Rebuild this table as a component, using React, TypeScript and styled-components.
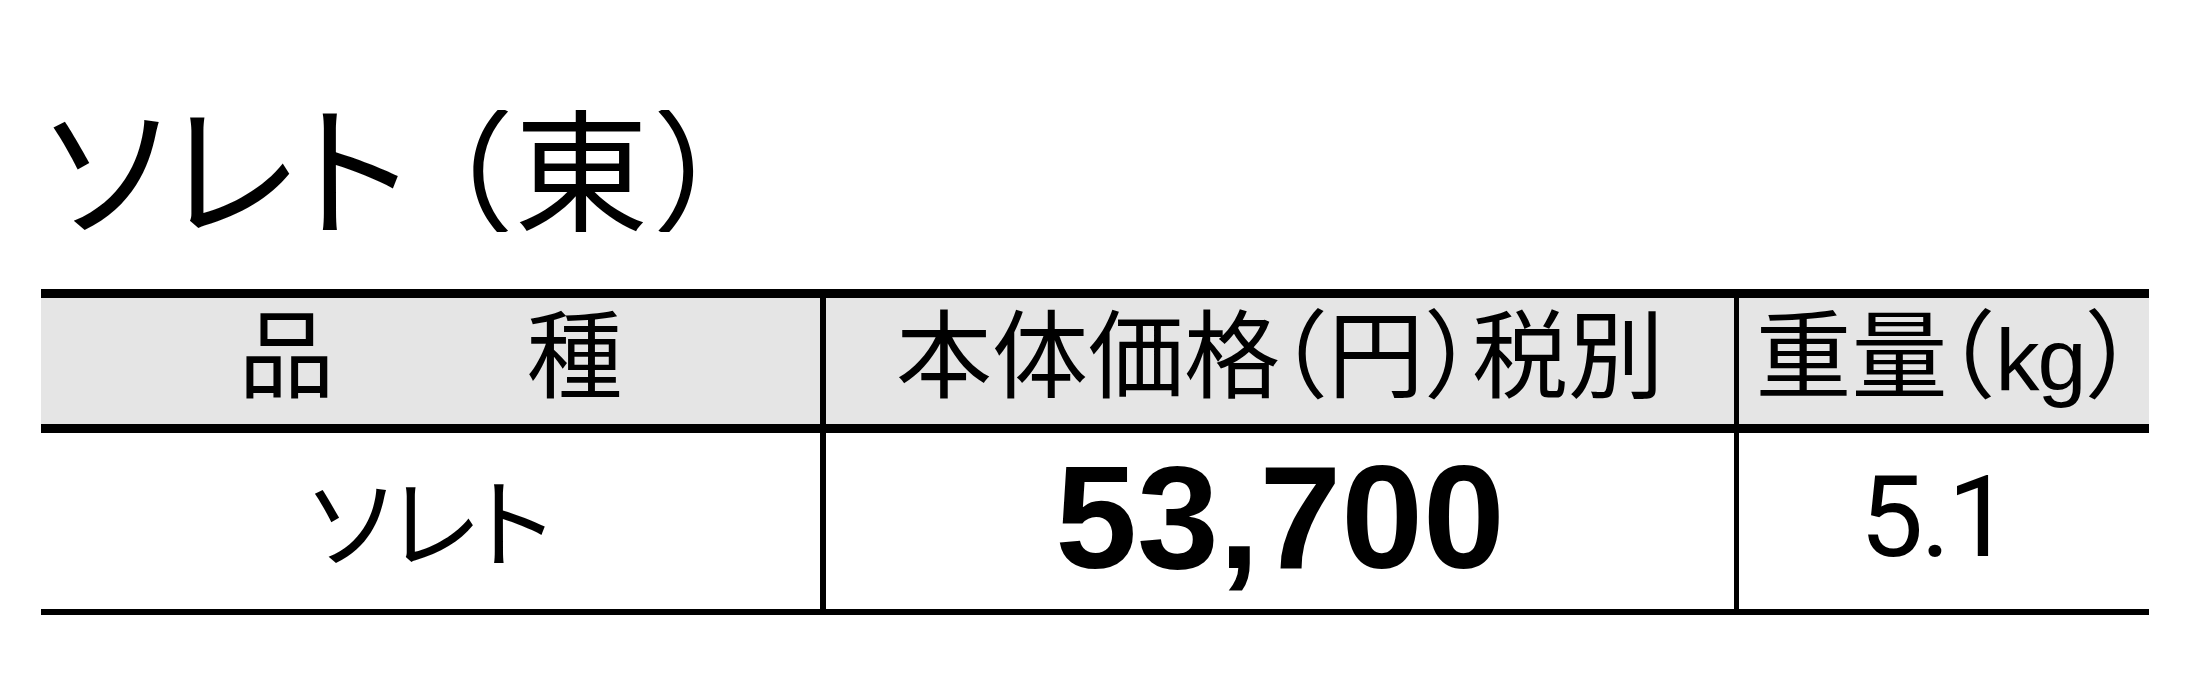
import React from "react";
import styled, { createGlobalStyle } from "styled-components";

const GlobalStyle = createGlobalStyle`
  html, body {
    margin: 0;
    padding: 0;
    background: #ffffff;
  }
  body {
    font-family: "Noto Sans CJK JP", "Noto Sans", sans-serif;
    color: #000000;
  }
`;

const Page = styled.div`
  width: 2210px;
  height: 686px;
  box-sizing: border-box;
  padding: 110px 0 0 41px;
  background: #ffffff;
`;

const TitleClip = styled.div`
  height: 122px;
  overflow: hidden;
  margin-left: 4px;
`;

const TitleText = styled.h1`
  margin: -13px 0 0 0;
  font-family: "Noto Sans CJK JP", sans-serif;
  font-weight: 400;
  font-size: 134px;
  line-height: 134px;
  white-space: nowrap;
  font-feature-settings: "halt";
`;

const TitleKana = styled.span`
  font-size: 145px;
  line-height: 100px;
  vertical-align: -4px;
  font-feature-settings: "palt";
  letter-spacing: 2px;
  margin-right: 37px;
`;

const Paren = styled.span`
  margin: 0 4px;
`;

const Table = styled.div`
  margin-top: 57px;
  width: 2108px;
  display: flex;
  flex-direction: column;
`;

const Row = styled.div<{ $head?: boolean }>`
  display: grid;
  grid-template-columns: 779px 914px 415px;
  height: ${(p) => (p.$head ? "144px" : "182px")};
  box-sizing: border-box;
  border-top: ${(p) => (p.$head ? "9px solid #000" : "0")};
  border-bottom: ${(p) => (p.$head ? "9px" : "6px")} solid #000;
  background: ${(p) => (p.$head ? "#e5e5e5" : "#ffffff")};
`;

const Cell = styled.div<{ $divider?: number }>`
  display: flex;
  align-items: center;
  justify-content: center;
  box-sizing: border-box;
  border-left: ${(p) => (p.$divider ? `${p.$divider}px solid #000` : "0")};
  white-space: nowrap;
  padding-bottom: 8px;
`;

const HeadText = styled.span`
  font-family: "Liberation Sans", "Noto Sans CJK JP", sans-serif;
  font-size: 96px;
  line-height: 1;
  font-feature-settings: "halt";
`;

const Unit = styled.span`
  font-size: 88px;
  letter-spacing: -2px;
`;

const KanaText = styled.span`
  font-family: "Noto Sans CJK JP", sans-serif;
  font-size: 98px;
  line-height: 1;
  font-feature-settings: "palt";
`;

const PriceText = styled.span`
  font-family: "Liberation Sans", Arial, sans-serif;
  font-weight: 700;
  font-size: 147px;
  line-height: 1;
`;

const WeightText = styled.span`
  font-family: Roboto, "Liberation Sans", Arial, sans-serif;
  font-weight: 400;
  font-size: 114px;
  line-height: 1;
  letter-spacing: -3px;
  padding-right: 20px;
`;

export default function App() {
  return (
    <>
      <GlobalStyle />
      <Page>
        <TitleClip>
          <TitleText>
            <TitleKana>ソレト</TitleKana>（東<Paren>）</Paren>
          </TitleText>
        </TitleClip>
        <Table>
          <Row $head>
            <Cell>
              <HeadText>品　　種</HeadText>
            </Cell>
            <Cell $divider={6}>
              <HeadText>本体価格（円）税別</HeadText>
            </Cell>
            <Cell $divider={5}>
              <HeadText>
                重量（<Unit>kg</Unit>）
              </HeadText>
            </Cell>
          </Row>
          <Row>
            <Cell>
              <KanaText>ソレト</KanaText>
            </Cell>
            <Cell $divider={6}>
              <PriceText>53,700</PriceText>
            </Cell>
            <Cell $divider={5}>
              <WeightText>5.1</WeightText>
            </Cell>
          </Row>
        </Table>
      </Page>
    </>
  );
}
